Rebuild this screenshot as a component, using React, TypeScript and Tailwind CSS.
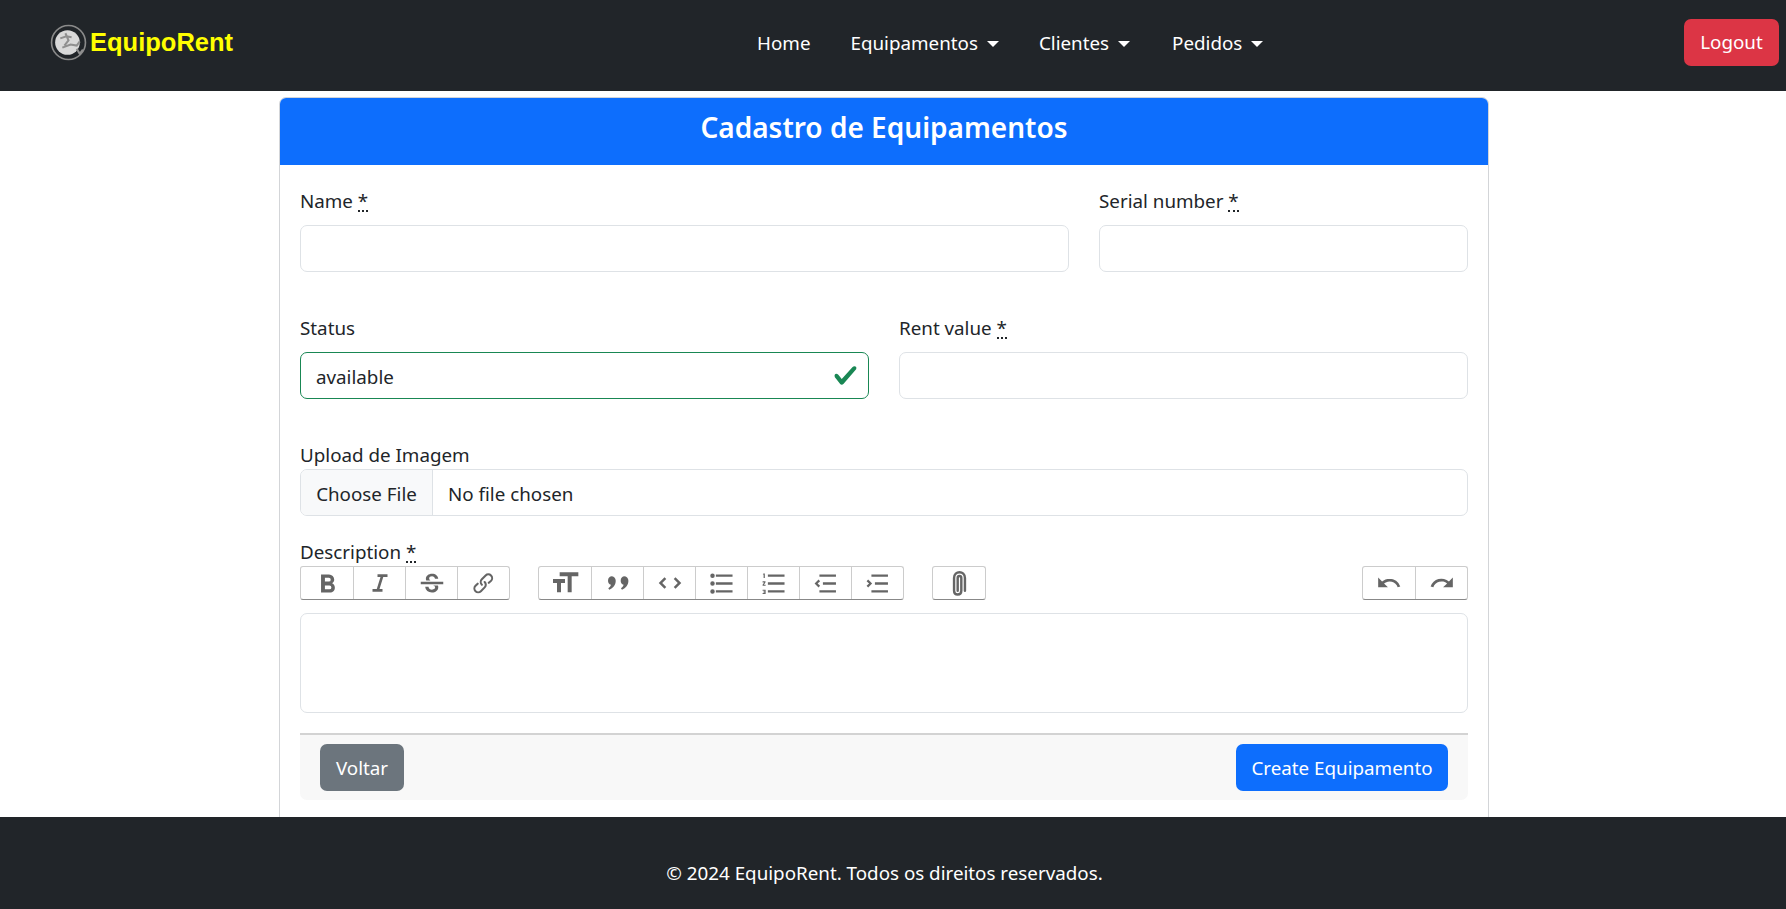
import type { ReactNode } from 'react';

const font = { fontFamily: '"Noto Sans", sans-serif' };

function Req() {
  return <span className="border-b-2 border-dotted border-[#212529] leading-[18px] inline-block h-[20px]">*</span>;
}

function Label({ children }: { children: ReactNode }) {
  return <label className="block h-[30px] leading-[30px] mb-[9px]">{children}</label>;
}

function Input() {
  return <div className="h-[47px] rounded-[7px] border border-[#dee2e6] bg-white" />;
}

function Caret() {
  return <span className="ml-[9px] inline-block align-[3px] border-x-[6px] border-t-[6px] border-x-transparent border-t-white" />;
}

function Tool({ d, size = 27, stroke, first }: { d: string | string[]; size?: number; stroke?: boolean; first?: boolean }) {
  const paths = Array.isArray(d) ? d : [d];
  return (
    <div className={`flex h-full w-[52px] items-center justify-center ${first ? '' : 'border-l border-[#ccc]'}`}>
      <svg viewBox="0 0 24 24" width={size} height={size} className="opacity-60">
        {paths.map((p) =>
          stroke ? (
            <path key={p} d={p} fill="none" stroke="#000" strokeWidth="2" strokeLinecap="round" />
          ) : (
            <path key={p} d={p} fill="#000" />
          ),
        )}
      </svg>
    </div>
  );
}

function Group({ children }: { children: ReactNode }) {
  return (
    <div className="flex h-[34px] rounded-[3px] border border-[#ccc] border-b-[#888]">{children}</div>
  );
}

function Logo() {
  return (
    <svg viewBox="0 0 36 36" className="h-[37px] w-[37px] shrink-0">
      <circle cx="18" cy="18" r="16.5" fill="none" stroke="#8a8a8a" strokeWidth="1.6" />
      <circle cx="17" cy="18" r="12" fill="#d9d9d9" />
      <path d="M10 14l6-2 5 1M15 9l3 7-4 5M12 23l8-3 6 1 3-4M26 24l3 5 3-4" fill="none" stroke="#8f8f8f" strokeWidth="2" />
    </svg>
  );
}

export default function App() {
  return (
    <div className="flex h-screen flex-col overflow-hidden bg-white text-[18.8px] text-[#212529]" style={font}>
      <nav className="flex h-[91px] shrink-0 items-center bg-[#212529] pb-[6px] pl-[50px] pr-[7px] text-white">
        <div className="flex items-center gap-[3px]">
          <Logo />
          <span className="text-[25.5px] font-bold text-[#ffff00]" style={{ fontFamily: '"Liberation Sans", sans-serif' }}>
            EquipoRent
          </span>
        </div>
        <div className="ml-[524px] flex items-center gap-[40px] pt-[1px]">
          <span>Home</span>
          <span>
            Equipamentos
            <Caret />
          </span>
          <span>
            Clientes
            <Caret />
          </span>
          <span className="ml-[2px]">
            Pedidos
            <Caret />
          </span>
        </div>
        <button className="ml-auto h-[47px] w-[95px] rounded-[7px] bg-[#dc3545]">Logout</button>
      </nav>

      <main className="min-h-0 flex-1 overflow-hidden pt-[6px]">
        <div className="ml-[279px] w-[1210px] overflow-hidden rounded-t-[7px] border border-[#d3d5d8]">
          <div className="flex h-[67px] items-center justify-center bg-[#0d6efd] pb-[9px] text-[28px] font-semibold text-white">
            Cadastro de Equipamentos
          </div>
          <div className="px-[20px] pb-[20px] pt-[21px]">
            <div className="flex gap-[30px]">
              <div className="w-[769px]">
                <Label>
                  Name <Req />
                </Label>
                <Input />
              </div>
              <div className="flex-1">
                <Label>
                  Serial number <Req />
                </Label>
                <Input />
              </div>
            </div>

            <div className="mt-[41px] flex gap-[30px]">
              <div className="flex-1">
                <Label>Status</Label>
                <div className="flex h-[47px] items-center justify-between rounded-[7px] border border-[#198754] pl-[15px] pr-[10px]">
                  <span className="pt-[4px]">available</span>
                  <svg viewBox="0 0 8 8" className="h-[25px] w-[25px]">
                    <path fill="#198754" d="M2.3 6.73.6 4.53c-.4-1.04.46-1.4 1.1-.8l1.1 1.4 3.4-3.8c.6-.63 1.6-.27 1.2.7l-4 4.6c-.43.5-.8.4-1.1.1z" />
                  </svg>
                </div>
              </div>
              <div className="flex-1">
                <Label>
                  Rent value <Req />
                </Label>
                <Input />
              </div>
            </div>

            <div className="mt-[41px] h-[29px] leading-[30px]">Upload de Imagem</div>
            <div className="flex h-[47px] items-center overflow-hidden rounded-[7px] border border-[#dee2e6]">
              <div className="flex h-full w-[132px] items-center justify-center border-r border-[#dee2e6] bg-[#f8f9fa] pt-[3px]">
                Choose File
              </div>
              <span className="pl-[15px] pt-[3px]">No file chosen</span>
            </div>

            <div className="mt-[21px] h-[29px] leading-[30px]">
              Description <Req />
            </div>
            <div className="flex items-start">
              <Group>
                <Tool first size={31} d="M15.6 11.8c1-.7 1.6-1.8 1.6-2.8a4 4 0 0 0-4-4H7v14h7c2.1 0 3.7-1.7 3.7-3.8 0-1.5-.8-2.8-2.1-3.4zM10 7.500h3a1.500 1.500 0 1 1 0 3h-3v-3zm3.500 9H10v-3h3.500a1.500 1.500 0 1 1 0 3z" />
                <Tool size={30} d="M10 5v2.200h2.400l-3 9.600H6V19h8v-2.200h-2.400l3-9.600H18V5h-8z" />
                <Tool size={30} d="M12.700 14h4.100c.1.400.2.800.2 1.300 0 2.600-2.200 4.200-5 4.200-3 0-5.200-1.600-5.400-4.500h2.600c.2 1.500 1.300 2.300 2.800 2.300 1.400 0 2.500-.7 2.500-1.800 0-.7-.5-1.200-1.800-1.500zM3 11h18v2H3zM7.400 10c-.2-.4-.3-.9-.3-1.400C7.100 6.200 9.200 4.500 12 4.500c2.900 0 4.800 1.600 5 4.100h-2.600c-.2-1.300-1.100-2-2.400-2-1.300 0-2.300.7-2.300 1.800 0 .6.300 1.100 1 1.600z" />
                <Tool d={["M9.880 13.700a4.300 4.300 0 0 1 0-6.070l3.370-3.370a4.260 4.260 0 0 1 6.070 0 4.300 4.300 0 0 1 0 6.060l-1.960 1.720a.91.91 0 1 1-1.300-1.300l1.970-1.710a2.460 2.460 0 0 0-3.480-3.480l-3.380 3.370a2.460 2.460 0 0 0 0 3.480.91.91 0 1 1-1.300 1.300z", "M4.250 19.460a4.300 4.300 0 0 1 0-6.070l1.930-1.900a.91.91 0 1 1 1.300 1.300l-1.930 1.900a2.460 2.460 0 0 0 3.480 3.480l3.370-3.380c.96-.96.96-2.520 0-3.480a.91.91 0 1 1 1.300-1.300 4.300 4.300 0 0 1 0 6.070l-3.380 3.380a4.260 4.260 0 0 1-6.070 0z"]} />
              </Group>
              <div className="ml-[28px]">
                <Group>
                  <Tool first size={32} d="M12 9v3H9v7H6v-7H3V9h9zM8 4h14v3h-5v12h-3V7H8V4z" />
                  <Tool size={32} d="M7 7a3.300 3.300 0 0 1 3.300 3.300c0 3-2 5.700-4.800 6.700l-.8-1.100c1-.7 1.800-1.500 2-2.600A3.300 3.300 0 0 1 7 7zm9.500 0a3.300 3.300 0 0 1 3.300 3.300c0 3-2 5.700-4.800 6.700l-.8-1.100c1-.7 1.800-1.500 2-2.600a3.300 3.300 0 0 1 .3-6.300z" />
                  <Tool size={30} d="M18.200 12L15 15.200l1.400 1.400L21 12l-4.600-4.600L15 8.800l3.200 3.200zm-12.400 0L9 8.800 7.600 7.400 3 12l4.600 4.600L9 15.200 5.800 12z" />
                  <Tool d="M4 3a2 2 0 1 0 0 4 2 2 0 0 0 0-4zm0 7a2 2 0 1 0 0 4 2 2 0 0 0 0-4zm0 7a2 2 0 1 0 0 4 2 2 0 0 0 0-4zM7 3.900h14.800v2.200H7zm0 7h14.800v2.200H7zm0 7h14.800v2.200H7z" />
                  <Tool d="M3 3h1.300v4H3.200V4H2.500zM2.300 10h2.600v.9L3.500 13h1.500v1H2.300v-.9L3.700 11H2.300zM2.300 17.500h2.700v3.800H2.300v-.9h1.600V20H3v-.8h.9v-.8H2.300zM7 3.900h14.800v2.200H7zm0 7h14.800v2.200H7zm0 7h14.800v2.200H7z" />
                  <Tool d="M6.600 3.900h14.700v2.200H6.600zM9.700 10.900h11.600v2.200H9.700zM6.600 17.900h14.700v2.200H6.600zM5.800 8.400l1.400 1.500L5 12l2.200 2.100-1.400 1.500L2.300 12z" />
                  <Tool d="M6.600 3.900h14.700v2.200H6.600zM9.700 10.900h11.600v2.200H9.700zM6.600 17.900h14.700v2.200H6.600zM3.700 8.400L7.200 12l-3.500 3.600-1.400-1.500L4.500 12 2.300 9.900z" />
                </Group>
              </div>
              <div className="ml-[28px]">
                <Group>
                  <Tool first stroke size={29} d="M10.500 18V7.500c0-2.250 3-2.250 3 0V18c0 4.125-6 4.125-6 0V7.500c0-6.375 9-6.375 9 0V18" />
                </Group>
              </div>
              <div className="ml-auto">
                <Group>
                  <Tool first size={26} d="M12.500 8c-2.600 0-5 1-6.900 2.600L2 7v9h9l-3.600-3.600A8 8 0 0 1 20 16l2.400-.8a10.500 10.500 0 0 0-10-7.200z" />
                  <Tool size={26} d="M18.400 10.600a10.500 10.500 0 0 0-16.900 4.600L4 16a8 8 0 0 1 12.700-3.600L13 16h9V7l-3.600 3.600z" />
                </Group>
              </div>
            </div>
            <div className="mt-[13px] h-[100px] rounded-[7px] border border-[#dee2e6]" />

            <div className="mt-[20px] flex h-[67px] items-center justify-between rounded-b-[7px] border-t-2 border-[#d3d3d3] bg-[#f8f8f8] px-[20px]">
              <button className="h-[47px] w-[84px] rounded-[7px] bg-[#6c757d] pt-[1px] text-white">Voltar</button>
              <button className="h-[47px] w-[212px] rounded-[7px] bg-[#0d6efd] pt-[1px] text-white">Create Equipamento</button>
            </div>
          </div>
        </div>
      </main>

      <footer className="flex h-[92px] shrink-0 items-center justify-center bg-[#212529] pr-[17px] pt-[21px] text-white">
        © 2024 EquipoRent. Todos os direitos reservados.
      </footer>
    </div>
  );
}
